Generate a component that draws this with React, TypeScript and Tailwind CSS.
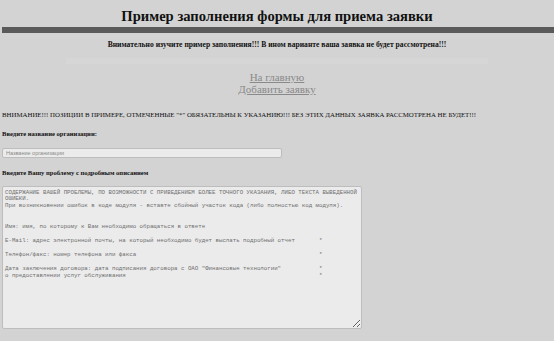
const serif = "font-['Liberation_Serif','Times_New_Roman',serif]";
const mono = "font-['Liberation_Mono','Courier_New',monospace]";

const col = 91;
const row = (text: string, star = false) => (star ? text.padEnd(col, " ") + "*" : text);

const problemText = [
  "СОДЕРЖАНИЕ ВАШЕЙ ПРОБЛЕМЫ, ПО ВОЗМОЖНОСТИ С ПРИВЕДЕНИЕМ БОЛЕЕ ТОЧНОГО УКАЗАНИЯ, ЛИБО ТЕКСТА ВЫВЕДЕННОЙ",
  "ОШИБКИ.",
  "При возникновении ошибок в коде модуля - вставте сбойный участок кода (либо полностью код модуля).",
  "",
  "",
  row("Имя: имя, по которому к Вам необходимо обращаться в ответе"),
  "",
  row("E-Mail: адрес электронной почты, на который необходимо будет выслать подробный отчет", true),
  "",
  row("Телефон/факс: номер телефона или факса", true),
  "",
  row('Дата заключения договора: дата подписания договора с ОАО "Финансовые технологии"', true),
  row("о предоставлении услуг обслуживания", true),
].join("\n");

export default function App() {
  return (
    <div className={`h-[341px] w-[554px] overflow-hidden bg-[#d3d3d3] text-[#111] ${serif}`}>
      <h1 className="pt-[7px] text-center text-[14.6px] font-bold leading-[18px]">
        Пример заполнения формы для приема заявки
      </h1>
      <div className="ml-[2px] mt-[2px] h-[6px] bg-[#5a5a5a]" />
      <p className="mt-[7px] text-center text-[7.6px] font-bold leading-[10px]">
        Внимательно изучите пример заполнения!!! В ином варианте ваша заявка не будет рассмотрена!!!
      </p>
      <div className="mx-[66px] mt-[8px] h-[6px] bg-[#d6d6d6]" />

      <div className="mt-[7px] flex flex-col items-center text-[11px] leading-[12px] text-[#8a8a8a]">
        <a href="#" className="underline">На главную</a>
        <a href="#" className="underline">Добавить заявку</a>
      </div>

      <p className="mt-[15px] pl-[2px] text-[6.85px] leading-[9px]">
        ВНИМАНИЕ!!! ПОЗИЦИИ В ПРИМЕРЕ, ОТМЕЧЕННЫЕ "*" ОБЯЗАТЕЛЬНЫ К УКАЗАНИЮ!!! БЕЗ ЭТИХ ДАННЫХ ЗАЯВКА РАССМОТРЕНА НЕ БУДЕТ!!!
      </p>

      <form className="pl-[2px]">
        <label className="block">
          <span className="mt-[10px] block text-[6.6px] font-bold leading-[9px]">Введите название организации:</span>
          <input
            placeholder="Название организации"
            className="mt-[9.5px] block h-[10px] w-[280px] rounded-[2px] border border-[#bdbdbd] bg-[#ebebeb] px-[3px] font-['Liberation_Sans',Arial,sans-serif] text-[5.5px] placeholder:text-[#8a8a8a] focus:outline-none"
          />
        </label>
        <label className="block">
          <span className="mt-[10.5px] block text-[6.6px] font-bold leading-[9px]">Введите Вашу проблему с подробным описанием</span>
          <textarea
            defaultValue={problemText}
            wrap="off"
            className={`mt-[8.5px] block h-[143px] w-[360px] resize-y overflow-hidden whitespace-pre rounded-[2px] border border-[#bdbdbd] bg-[#ebebeb] px-[2px] py-[3px] text-[5.75px] leading-[6.95px] text-[#6f6f6f] focus:outline-none ${mono}`}
          />
        </label>
      </form>
    </div>
  );
}
